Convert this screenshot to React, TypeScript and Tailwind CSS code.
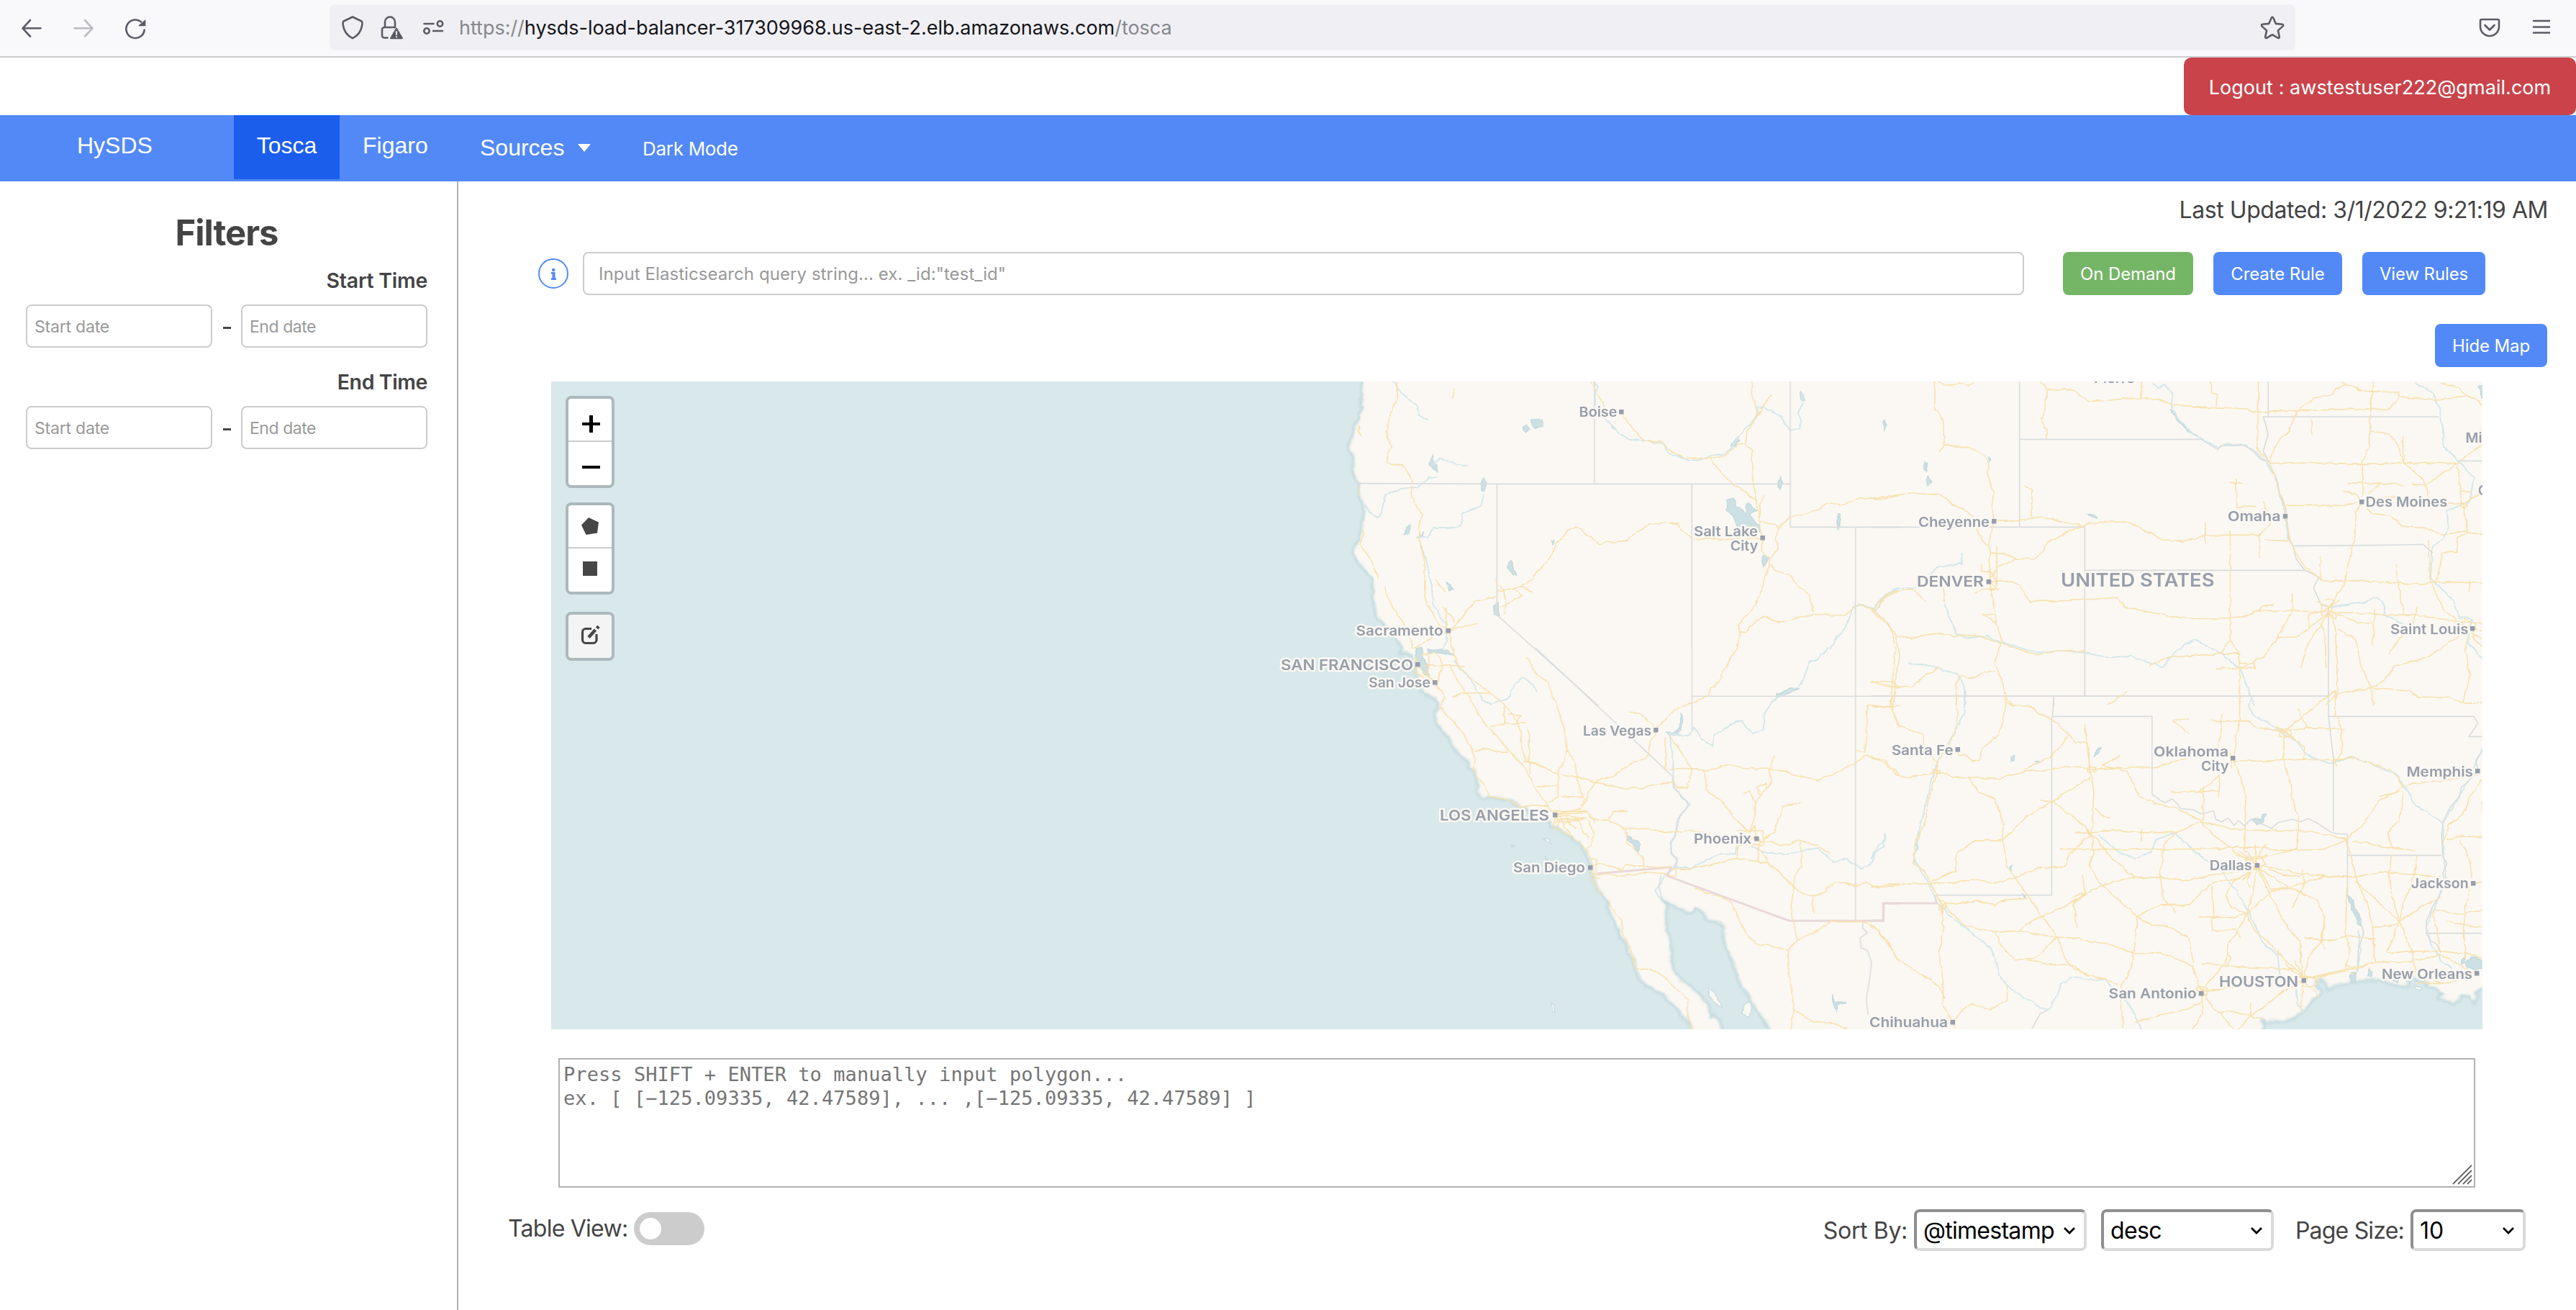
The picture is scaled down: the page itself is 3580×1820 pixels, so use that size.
import React from "react";

const Lines = ({ items, color, width, opacity = 1 }: { items: string[]; color: string; width: number; opacity?: number }) => (
  <g fill="none" stroke={color} strokeWidth={width} opacity={opacity} strokeLinejoin="round">
    {items.map((p, i) => (
      <polyline key={i} points={p} vectorEffect="non-scaling-stroke" />
    ))}
  </g>
);

const Shapes = ({ items, fill, stroke }: { items: string[]; fill: string; stroke?: string }) => (
  <g fill={fill} stroke={stroke ?? "none"} strokeWidth={1.5}>
    {items.map((p, i) => (
      <polygon key={i} points={p} vectorEffect="non-scaling-stroke" />
    ))}
  </g>
);

type Sheet = {
  transform: string;
  coast: { line: string; close: string }[];
  water: string[];
  islands: string[];
  borders: string[];
  frontier: string[];
  rivers: string[];
  roads: string[];
};

const northWest: Sheet = {
  transform: "translate(974 -10) scale(.57398 .33333)",
  coast: [
    {
      line: "268,20 266,70 262,130 268,138 258,170 260,188 252,200 246,240 240,270 233,300 238,325 246,345 243,400 250,435 260,455 258,490 266,530 272,570 268,610 264,650 260,690 248,720 245,740 250,775 265,800 278,825 290,850 294,890 291,930 296,960 300,1005 315,1035 330,1065 348,1100 358,1125 364,1142",
      close: "-1700,1142 -1700,20",
    },
  ],
  water: [
    "1150,525 1165,516 1173,530 1170,550 1188,565 1197,590 1195,545 1205,540 1222,570 1210,575 1205,590 1228,630 1232,655 1200,650 1175,635 1165,590 1148,570",
    "555,445 561,435 568,450 562,490 556,490",
    "620,785 628,780 633,800 638,838 630,830 618,805",
    "585,965 598,950 598,1003 586,1000",
    "430,370 438,340 440,365 449,380 447,405 440,400",
    "677,192 704,190 703,215 686,226 678,212",
    "655,222 663,212 671,228 663,240",
    "1276,440 1280,426 1284,450 1279,480 1275,465",
    "1160,298 1175,262 1181,275 1168,300",
    "1237,755 1250,760 1248,780 1238,805 1234,785",
    "1330,72 1334,80 1338,108 1332,112 1328,105",
    "1527,205 1531,192 1535,208 1531,230",
    "1418,585 1424,590 1423,630 1418,650",
    "398,1150 410,1145 412,1170 425,1215 428,1260 415,1245 405,1215 395,1180",
    "372,640 383,628 380,665 370,665",
    "470,865 480,880 488,897 480,905",
    "402,680 410,670 416,655 412,680",
    "725,695 731,690 727,712",
    "1270,1340 1290,1320 1305,1320 1285,1335",
  ],
  islands: [],
  borders: [
    "829,30 829,455",
    "260,455 593,457 1303,457",
    "593,458 593,1003 838,1380",
    "1065,458 1065,1142",
    "1303,30 1303,637 1568,637",
    "1461,638 1461,1142",
  ],
  frontier: [],
  rivers: [
    "828,30 838,50 830,90 828,160 855,185 885,240 910,272 960,278 995,290 1010,330 1060,360 1100,350 1120,335 1140,335 1160,310 1175,265 1225,170 1225,135 1245,140 1280,175 1303,235 1325,225 1330,200 1322,160 1335,110 1332,75",
    "342,30 360,75 400,130 405,175 428,190",
    "440,375 455,350 485,370 522,382",
    "450,430 430,430 400,470 345,485 325,500 315,560 305,597 285,580 272,540",
    "560,500 555,545 510,580 505,630 490,640 440,638 425,680 405,682",
    "407,710 420,770 435,880 438,960 468,1040 472,1110 460,1150 425,1155",
    "1568,890 1530,930 1510,985 1480,960 1455,970 1435,1060 1415,1100 1400,1142",
  ],
  roads: [
    "350,30 352,70 353,110 340,140 330,200 328,260 337,300 328,330 325,370 345,378 365,380 382,420 388,460 385,510 400,550 412,590 403,640 407,700 415,760 418,830 418,900 425,960 440,1010 455,1050 475,1068 485,1142",
    "475,1068 495,1045 515,1000 540,945 575,935 593,925",
    "590,855 595,880 610,900 650,885 668,870 690,825 715,780 728,745 735,705 750,685 765,650 785,635 810,665 842,708 860,695 880,703 910,690 935,650 965,625 995,618 1030,625 1045,655 1065,685 1140,688 1236,685",
    "593,905 610,903 615,960 612,1000",
    "650,885 678,905",
    "635,890 652,925 615,960 600,975",
    "262,650 272,665 262,710 275,740 290,780 298,820 305,850",
    "320,885 330,940 345,980 365,1030 380,1090 388,1142",
    "260,210 258,235 265,255",
    "490,60 485,105",
    "820,30 835,80 850,120 858,150",
    "895,165 915,210 950,278 990,280 1010,315 1045,348 1110,350 1145,340 1175,295 1193,287",
    "1210,30 1210,90 1222,150 1222,180 1198,240 1193,287 1200,305 1210,320 1215,480 1220,520 1228,600 1236,680 1236,740 1253,770 1253,800 1240,850 1235,900 1215,970 1180,1040 1180,1090 1175,1142",
    "1260,80 1245,110 1235,145 1222,175",
    "1110,350 1135,410 1165,460 1190,485 1222,530",
    "1240,507 1230,540 1228,610 1265,625 1275,640 1303,592 1350,580 1395,540 1435,540 1475,513 1520,523 1568,505",
    "1275,640 1270,690 1274,725 1255,765",
    "1255,795 1270,820 1300,835 1320,880 1350,920 1360,990",
    "1180,1075 1195,1075 1215,1035 1240,1008 1275,1035 1310,1020 1370,1000 1435,1005 1470,957 1500,980 1520,970 1530,935 1568,900",
    "1500,980 1530,1020 1545,1060 1555,1110 1558,1142",
    "470,970 470,1060",
    "458,970 485,1010 490,1035",
    "445,855 468,905",
    "262,470 258,500",
    "475,1068 520,1045 548,1040",
    "390,1142 410,1125 440,1095 475,1075",
  ],
};

const southWest: Sheet = {
  transform: "translate(974 370) scale(.57398 .34439)",
  coast: [
    {
      line: "364,0 358,25 372,18 383,30 392,60 396,90 400,115 404,145 412,175 428,195 442,205 450,225 452,245 442,262 444,300 460,335 475,360 486,395 495,420 512,445 525,462 524,485 535,495 544,520 546,560 545,585 558,607 580,604 610,612 630,620 645,638 665,650 672,668 695,676 715,690 722,705 722,722 738,724 755,745 775,768 795,795 806,820 814,850 820,885 825,930 835,965 848,1000 862,1025 862,1060 875,1095 888,1140 890,1165 905,1190 910,1230 925,1260 930,1305 940,1345 960,1370 990,1395 1010,1425 1030,1460 1045,1490 1060,1520 1066,1545",
      close: "-1700,1545 -1700,0",
    },
    {
      line: "1140,1545 1135,1510 1118,1480 1110,1490 1105,1440 1085,1400 1060,1365 1035,1335 1020,1300 1015,1240 1012,1170 1003,1140 1002,1090 1005,1050 1000,1030 990,1010 1012,1035 1030,1050 1060,1073 1070,1068 1072,1050 1095,1070 1100,1095 1125,1108 1143,1125 1142,1175 1150,1220 1162,1260 1170,1300 1178,1340 1190,1380 1205,1410 1212,1440 1225,1470 1240,1500 1252,1545",
      close: "",
    },
  ],
  water: [
    "908,758 918,765 942,795 935,822 928,815 920,785 908,772",
    "400,0 412,0 414,35 425,75 430,120 420,100 405,75 397,30",
    "425,8 470,10 490,30 460,20 430,22",
    "1003,340 1020,342 1035,325 1040,265 1044,280 1040,330 1025,350 1008,352",
    "1270,200 1268,185 1285,185 1300,165 1325,165 1310,175 1285,195",
    "1407,1400 1412,1430 1438,1433 1415,1440 1415,1470 1408,1440",
  ],
  islands: [
    "1105,1375 1120,1395 1135,1435 1137,1455 1120,1430 1105,1400",
    "1195,1430 1208,1430 1210,1465 1200,1492 1186,1475 1190,1450",
    "706,768 722,775 726,792 714,787",
    "627,798 637,803 630,806",
    "725,1432 731,1440 733,1470 727,1462",
    "708,840 716,858 710,856",
  ],
  borders: [
    "686,0 1018,518",
    "1018,518 1020,560 1040,600 1060,632 1035,680 1030,720 1024,760 1014,780 1015,830 1030,850 1026,885",
    "1065,0 1065,330",
    "1065,195 1568,195",
    "1461,0 1461,1101",
    "1480,1101 1478,1130 1490,1150 1472,1170 1475,1210 1490,1220 1500,1270 1495,1340 1487,1420 1492,1480",
    "990,920 985,960 992,1010",
  ],
  frontier: ["835,911 1015,885 1005,920 1300,1101 1528,1101 1528,1031 1568,1031"],
  rivers: [
    "490,50 500,80 530,130 560,215 580,228 620,205 640,140 655,120 680,150 692,178",
    "1395,0 1370,45 1350,60 1330,150 1270,200 1250,240 1240,270 1238,330 1215,345 1195,320 1188,295 1170,300 1120,350 1115,398 1090,370 1070,320 1055,355 1010,345 1020,450 1020,560 1058,632 1030,690 1026,760 1014,790 1015,830 1030,860 1020,885 1000,920 975,980 990,1010",
    "1210,800 1250,830 1300,832 1330,820 1370,810 1410,865 1440,850 1475,893 1500,865 1515,800 1535,775 1530,750",
    "1020,885 1060,888 1130,835 1170,830 1175,790",
  ],
  roads: [
    "480,70 490,110 510,160 540,240 560,300 600,370 630,430 660,480 680,550 695,590 712,630 733,670",
    "485,0 495,60 520,110 575,180 610,230 640,290 650,340 655,430 670,460 675,510",
    "665,35 685,100 715,140 735,220 755,320 763,410 750,470 740,510 742,600 715,625",
    "763,410 785,480 790,540 803,610 797,640",
    "445,145 468,200 455,240 480,290 510,340 530,400 540,460 535,495 560,550 575,600 610,610 650,640 685,635 720,640",
    "670,460 700,475 740,510 790,525 828,540 870,520 915,470 955,445 965,380 978,340",
    "540,415 575,405 590,420 620,422",
    "485,200 505,182 575,182",
    "733,672 797,650 828,540 895,567 945,565 970,553 1018,540 1030,565 1055,565 1063,490",
    "1003,493 1065,487 1100,495 1155,470 1190,487 1250,485 1300,505 1370,535 1420,500 1460,465 1485,435 1530,455 1568,510",
    "978,331 1000,285 1035,240 1065,225 1105,190 1110,165 1135,130 1145,80 1175,0",
    "910,262 940,265 975,320",
    "1000,360 1000,430 1003,493",
    "1010,355 1035,410 1065,490",
    "733,672 810,665 835,695 865,695 900,730 960,730 1000,745 1060,738 1110,748",
    "1172,738 1238,738 1238,795 1175,795 1175,850",
    "1205,740 1218,680 1218,625 1245,570 1258,540 1253,490 1265,433",
    "1188,585 1205,580 1218,625",
    "1230,590 1222,560 1245,545 1245,570",
    "1095,495 1100,570 1140,625 1170,690 1205,745",
    "1240,768 1265,745 1275,690 1285,640 1310,630 1330,625",
    "1225,780 1255,780 1280,798 1300,795 1325,775 1370,800 1400,830",
    "1328,780 1330,880 1312,920 1310,967",
    "1230,770 1228,800 1250,865 1290,930 1312,967 1345,1000 1375,1000 1410,943 1465,960 1485,945 1515,968 1568,955",
    "1228,795 1225,860",
    "1252,867 1170,850 1110,875 1050,893 1015,890 960,880 905,880 895,895 850,870 822,880",
    "825,910 900,920 955,905 990,910 1010,920 1025,918 1025,890",
    "1312,967 1305,1040 1312,1110 1320,1180 1298,1220 1300,1320 1308,1400 1312,1440 1305,1540",
    "1298,1220 1250,1200 1220,1197 1195,1150 1175,1080 1158,1020 1070,970",
    "1320,1180 1360,1150 1400,1105 1485,1105 1520,1150 1550,1220 1568,1270",
    "1312,1460 1360,1510 1400,1510 1440,1538",
    "733,672 730,722 775,765 805,805 822,850 822,930 850,1005",
    "862,1020 870,1050 895,1100 897,1150 915,1210 930,1295 965,1297 1000,1330 1030,1380 1055,1420 1055,1490 1066,1540",
    "815,695 828,760 820,800 808,810",
    "905,735 910,790 945,845 948,900",
    "1568,235 1545,240 1490,230 1485,400 1483,418 1463,418",
    "1558,0 1555,60 1545,240 1560,290 1568,320",
    "1497,138 1550,140 1568,155",
    "730,660 800,660 815,660",
    "733,680 770,680 808,690 750,705 730,700",
    "745,672 755,720 772,750",
    "735,695 790,690 800,740 815,765",
    "760,670 765,700 785,730",
    "733,672 745,700 738,722",
    "750,600 800,600",
    "690,557 738,557",
    "865,690 875,660 908,660",
    "830,708 828,690 815,680",
    "398,40 405,80 435,125 445,150",
    "410,30 440,20 455,40 462,75 445,150",
    "415,72 515,72",
    "430,30 425,110 445,145",
    "398,30 396,100 425,130",
    "610,220 610,310 575,318",
    "610,305 665,305",
    "620,270 650,270 640,305",
    "1357,1003 1360,1072",
    "820,850 835,850 830,930 845,930",
    "1205,740 1218,718 1218,760 1200,790",
    "665,325 672,350 670,460",
    "658,455 684,462",
  ],
};

const northEast: Sheet = {
  transform: "translate(1834 -10) scale(.57398 .33333)",
  coast: [],
  water: [
    "30,205 33,192 37,210 33,230",
    "131,365 137,370 134,405 130,395",
    "133,440 140,425 148,450 138,465",
    "525,582 540,585 551,598 535,595",
    "723,140 735,160 740,180 775,240 793,255 770,240 740,190",
    "285,345 291,355 287,362",
    "1472,50 1480,45 1480,100",
    "213,785 220,782 221,792",
  ],
  islands: [],
  borders: [
    "360,30 360,637",
    "360,271 800,271 840,313 850,297 905,297 925,320 945,355 965,365",
    "0,637 518,637 518,1341",
    "518,817 1050,817",
    "962,30 962,177",
    "1376,177 950,177 957,215 962,250 950,320 965,370 985,450 990,510 1005,560 1012,690 1022,715 1210,713 1338,709 1360,745",
    "1022,715 1030,770 1050,815 1085,845 1072,890 1090,960 1108,970 1108,1341",
    "0,1341 1108,1341",
    "443,1341 443,1380",
    "1422,361 1480,361",
  ],
  frontier: [],
  rivers: [
    "685,35 695,58 710,45 730,80 728,130 740,180 775,240 800,270 840,305 860,293 910,295 940,335 955,365 980,430 995,520 1003,600 1012,690",
    "1320,30 1360,80 1376,140 1385,230 1385,300 1422,360 1460,430 1450,530 1395,570 1398,640 1385,690 1360,720 1355,850 1410,940 1425,1010 1455,1020 1445,1120 1480,1185",
    "178,960 200,1050 205,1080 230,1100 280,1090 320,1120 345,1130 400,1160 460,1150 530,1165 580,1183 630,1175 705,1220 740,1150 785,1108 850,1165 895,1230 915,1320 930,1380",
    "90,1207 130,1210 160,1225 210,1250 225,1300 230,1380",
    "0,980 25,935 60,893 115,888",
    "1110,970 1150,960 1200,950 1220,930 1240,950 1245,1000 1290,1045",
    "218,745 220,785 165,805 140,835",
  ],
  roads: [
    "155,30 155,145 175,190 178,295 240,305 275,340 285,370 285,440 298,490 293,540 298,610",
    "165,320 178,295",
    "160,35 190,45 215,40 235,45 250,33",
    "0,520 95,495 165,503 200,540 235,575 250,595",
    "298,610 360,608 400,597 440,600 460,615 515,630 550,617 620,615 660,645 705,690 755,697 810,670 940,670 970,620",
    "515,630 460,670 430,700 415,740 398,768 350,770 310,800 288,850",
    "298,610 288,680 288,860 295,940 303,1030 317,1110 300,1200 320,1290 328,1350 345,1380",
    "255,630 268,690 285,715",
    "288,745 320,748 355,770",
    "390,595 390,480 373,463",
    "410,30 428,65 480,62 530,112 580,108 620,100 690,102 735,128 830,140 910,147 925,158 1080,150 1165,145 1255,145 1280,95",
    "428,65 418,165 412,190 425,230 425,268",
    "822,30 825,75 837,80 837,140",
    "655,30 655,98",
    "938,30 938,160 935,310 965,370",
    "965,370 1070,370 1200,373 1290,370 1420,370",
    "965,370 985,280 1010,240 1030,160 1070,100 1120,85 1125,60 1155,45 1190,70 1275,75 1280,95 1370,105 1440,90",
    "1135,30 1155,45",
    "1380,35 1420,55 1445,90 1470,110 1480,130",
    "1216,30 1210,150 1208,300 1190,360 1190,510",
    "965,370 985,470 1000,530 1005,590 1015,690 1040,780 1090,860",
    "1005,547 1140,547 1188,530 1240,515 1310,515 1400,540 1435,540 1480,490",
    "1145,487 1175,500 1190,540 1175,570 1172,680 1155,800 1145,880 1110,970",
    "286,860 340,865 360,880 385,947 480,943 575,933 600,933 615,970 670,990 760,1017 840,1020 900,1010 940,985 1020,985 1090,990 1110,970",
    "1110,970 1110,990 1250,1002 1310,1003 1380,1020 1440,1035 1480,1040",
    "1090,862 1180,860 1330,875 1365,865 1480,870",
    "870,655 870,1110 890,1160 893,1220 893,1380",
    "848,1165 893,1163",
    "870,1110 845,1165 760,1175 720,1180 675,1215",
    "835,1225 930,1225 930,1205 893,1205",
    "1110,990 1060,1060 1030,1095 985,1097 950,1180 893,1225",
    "985,1097 1020,990",
    "1110,990 1125,1060 1130,1320 1125,1380",
    "1090,1040 1100,1100 1102,1225",
    "1110,990 1060,1120 1048,1180 1040,1230",
    "1130,1060 1175,1105 1185,1200 1210,1305",
    "1455,1060 1400,1120 1350,1180 1270,1215 1245,1270 1210,1310 1130,1330 1100,1380",
    "1210,1310 1305,1320 1325,1345 1400,1345 1430,1370 1480,1372",
    "1210,1310 1218,1380",
    "1445,1070 1440,1150 1450,1260 1435,1370",
    "1455,1090 1480,1130",
    "1290,370 1340,440 1345,470",
    "1155,452 1275,457 1290,463",
    "1235,455 1205,500",
    "1310,460 1345,460",
    "1420,370 1375,425 1345,460 1350,510",
    "1480,290 1420,370 1425,440 1430,540",
    "1430,490 1455,490",
    "1435,540 1447,660 1480,668",
    "1447,660 1420,680 1420,740 1385,745 1370,860",
    "1210,240 1255,250 1275,290 1290,370",
    "1290,255 1290,365",
    "1350,690 1355,860 1385,980 1440,1050",
    "1195,550 1215,580 1260,590 1285,635 1340,640 1385,670 1447,650",
    "0,985 25,940 45,910 100,895 135,945",
    "0,985 40,1040 60,1090 70,1170 60,1280 55,1380",
    "60,1090 100,1100 150,1080 200,1090 260,1090 317,1120 400,1170 450,1150 520,1157",
    "205,1380 205,1300 215,1260 250,1265 270,1245 300,1235",
    "0,1285 50,1300 100,1305 125,1260 165,1225",
    "620,1322 575,1380",
    "885,435 885,555 935,550",
    "870,452 900,452",
    "940,660 940,765",
    "810,620 810,710",
    "955,690 1010,695",
    "1068,190 1068,248",
    "1088,760 1090,860",
    "1270,790 1280,900 1290,1000",
    "1220,980 1215,1130",
    "1255,1165 1275,1110 1310,1050 1325,965",
    "1020,915 1022,985",
    "1450,860 1450,905",
    "950,530 960,570 975,600",
    "1060,1060 1060,1000 1110,985 1180,1035 1215,1035",
    "1080,945 1110,970 1135,940",
    "1100,940 1118,940 1118,1005 1090,1005 1090,960",
    "1125,990 1125,1020 1100,1010",
    "265,820 290,825 305,860 305,895 270,895 250,915",
    "268,790 265,820",
    "305,715 305,860",
    "285,860 310,900",
    "175,880 180,950",
    "295,1000 270,1000 305,1035",
    "1435,1020 1465,1040 1455,1080 1480,1100",
    "1425,1040 1480,1070",
    "940,985 950,965 975,960",
    "1425,530 1445,545 1435,560 1425,545",
  ],
};

const southEast: Sheet = {
  transform: "translate(1834 430) scale(.57398 .33333)",
  coast: [
    {
      line: "945,1415 955,1400 946,1370 960,1382 975,1376 1000,1380 1030,1360 1055,1325 1068,1290 1085,1270 1090,1250 1080,1235 1078,1212 1092,1200 1100,1215 1105,1245 1125,1230 1160,1215 1200,1207 1230,1205 1260,1220 1290,1235 1305,1232 1298,1212 1310,1195 1330,1205 1350,1215 1345,1230 1370,1240 1375,1260 1385,1265 1370,1280 1395,1290 1410,1305 1425,1290 1430,1270 1450,1272 1462,1308 1470,1275 1462,1255 1485,1240",
      close: "1485,1415",
    },
  ],
  water: [
    "1440,1130 1455,1108 1475,1115 1485,1130 1485,1155 1460,1160 1445,1150",
    "1430,1120 1438,1115 1436,1135 1430,1138",
    "1165,1170 1175,1175 1173,1205 1165,1215 1160,1195",
    "1208,1158 1214,1170 1212,1190 1203,1190",
    "1265,1205 1280,1200 1275,1215",
    "540,275 550,240 558,237 548,265",
    "340,275 348,268 346,293 340,295",
    "398,295 407,290 407,298",
    "922,535 935,530 945,540 948,515 955,512 952,550 935,555",
    "1155,852 1168,870 1172,910 1185,935 1190,980 1180,975 1170,925 1158,880",
    "337,735 342,730 340,750",
    "365,845 373,855 371,862",
    "108,640 113,630 112,660",
  ],
  islands: ["1315,1228 1328,1230 1335,1240 1326,1248"],
  borders: [
    "0,21 1108,21",
    "518,0 518,21",
    "1108,0 1108,106 1460,106 1470,135 1448,190 1480,190",
    "1108,106 1120,280 1120,585",
    "443,21 440,106 681,106 681,430 700,455 712,465 730,450 742,470 750,490 780,495 800,512 830,500 835,535 850,545 865,530 880,560 890,540 905,562 920,535 970,572 985,550 1020,535 1040,545 1060,532 1085,555 1115,590 1140,597 1154,597 1154,852",
    "1154,685 1382,685",
    "438,106 438,851 157,851 157,880",
    "1190,980 1193,1010 1180,1080 1178,1170",
    "1345,1010 1480,1010",
    "430,1328 410,1345 400,1375 390,1410",
    "1480,250 1465,290 1470,330 1445,380 1430,400 1425,440 1405,480 1395,510 1385,550 1382,600 1385,690 1395,720 1385,760 1390,800 1375,860 1360,900 1345,960 1345,1010 1355,1040 1370,1055 1380,1090",
  ],
  frontier: ["0,957 31,957 31,885 162,885"],
  rivers: [
    "230,0 225,100 190,210 160,300 140,420 115,600 105,700 145,820 160,880 172,900 190,935 225,980 260,1030 290,1070 305,1130 310,1180 330,1230 360,1270 385,1290 410,1320 430,1328 445,1290 460,1220 480,1200 500,1190 530,1205 565,1203 580,1230 600,1260 620,1295 640,1350 655,1410",
    "915,0 920,30 915,60 925,100 960,130 1000,180 1030,210 1060,270 1110,305 1160,275 1200,295 1230,320 1270,345 1300,420 1320,480 1350,510 1385,545",
    "550,600 600,670 640,700 680,670 690,620 735,592 780,660 800,690 850,750 870,800 885,830 920,940 950,1050 985,1100 990,1180 1030,1240 1035,1310 1048,1340",
    "0,700 10,670 30,650 35,600",
    "1480,240 1465,300 1445,380 1410,480 1385,550 1388,700 1392,780 1370,880 1345,980 1355,1050 1385,1130 1410,1160",
    "1180,1000 1185,1080 1178,1170",
  ],
  roads: [
    "50,0 50,70 65,140 125,180 130,240 160,300 158,335",
    "0,63 45,70",
    "160,335 140,450 130,560 105,640 105,720 130,750 145,800 165,870 172,890",
    "0,270 40,310 60,345 90,360 135,350 160,335 200,357 310,367 340,350 380,335 430,330 470,315 540,325 620,320 690,320 740,290 790,270",
    "878,290 960,292 1050,285 1120,290 1160,275 1260,330 1290,400 1310,385 1370,378 1470,350",
    "205,0 210,120 200,180 195,210 160,300",
    "210,244 215,270 230,265 245,293 262,290 270,240 310,180 325,80 325,0",
    "325,45 345,60 380,60 405,90 440,120 480,180 495,213 525,213 530,325",
    "518,140 530,325 540,420 535,595",
    "480,180 440,270 370,330",
    "605,270 560,310 620,335 640,400 650,440 700,475 740,490 800,540",
    "530,360 440,460 380,520 320,620 250,625 205,680 205,750 150,790",
    "235,355 260,420 300,450 320,550 320,620 330,730 350,780 390,880 450,1020",
    "410,458 440,460 495,530 535,595",
    "545,485 560,520 580,530",
    "495,592 600,580 650,590 740,590 800,545",
    "535,595 540,680 528,730 560,810",
    "535,595 480,680 470,733 405,738 345,780 300,800 250,783 205,800 145,800",
    "800,545 830,600 890,680 935,725",
    "800,545 870,575 910,580 1035,582 1080,590 1150,615",
    "535,595 580,690 635,775 700,778 770,790 830,765 900,750 935,725",
    "893,0 893,120 885,180 878,290 890,340 908,440 905,660 935,725",
    "820,125 915,125 930,150 1000,170",
    "850,97 848,170 840,230",
    "730,120 770,120",
    "732,125 770,180",
    "725,420 840,418",
    "790,420 810,400 845,350",
    "845,345 840,445",
    "805,400 805,540",
    "1000,170 1000,300 1015,380 1020,450 1035,520 1035,580 1030,660 940,700",
    "1000,170 1050,100 1090,40 1125,0",
    "1000,170 1050,155 1150,160",
    "1000,170 1050,230 1050,285",
    "1125,0 1125,100 1140,160 1140,260 1120,310",
    "1060,160 1040,110 1035,70",
    "457,658 620,660 830,658 890,650 960,655 1000,665 1100,660 1150,620",
    "1290,400 1230,460 1190,560 1150,620 1165,700 1173,780",
    "1230,440 1280,420",
    "1290,420 1280,540 1250,590 1265,655 1320,665",
    "1165,630 1200,630 1220,645 1280,655",
    "935,725 1040,760 1100,772 1173,775 1230,755 1310,765 1380,775",
    "1459,802 1480,800",
    "1173,775 1200,880 1215,985 1220,1130 1150,1160 1048,1200",
    "1260,685 1255,780 1265,870 1280,960",
    "1325,685 1310,800 1290,880 1280,960",
    "1173,790 1240,900 1280,960 1310,1090 1320,1180 1380,1215",
    "1380,860 1330,900 1280,960 1255,980 1215,985",
    "1450,815 1440,900 1435,990 1440,1120",
    "1360,910 1420,930 1480,915",
    "1395,960 1440,975 1480,985",
    "1395,620 1430,605 1480,608",
    "1425,620 1450,700 1455,780",
    "1478,370 1450,440 1440,500 1400,560 1385,640",
    "1480,460 1480,510",
    "1250,1095 1300,1085 1380,1085 1440,1095 1480,1110",
    "1250,1090 1280,960",
    "1220,1130 1310,1128 1380,1100 1440,1155 1467,1177",
    "1380,1090 1375,1040 1360,920",
    "935,735 925,840 910,930 890,1000 865,1050 860,1130 800,1250",
    "935,735 880,790 860,850 870,900 910,930",
    "910,930 930,1000 960,1040 1000,1120 1030,1160 1048,1200",
    "935,735 970,860 1000,960 1040,1050 1045,1200",
    "935,735 1010,815 1080,870 1100,950 1090,1020 1100,1080",
    "1045,745 1050,800 1020,905",
    "1173,775 1100,772 1050,800 1010,820 965,840 940,880 910,930",
    "800,1250 860,1240 950,1200 1048,1195 1080,1195 1150,1165 1170,1180",
    "800,1250 780,1150 760,1130 700,1090 650,1095 560,1050 530,1045 500,1030 450,1027 360,1000 300,1003 230,980 172,890",
    "360,997 400,950 450,915 495,870 560,810 640,775",
    "510,770 520,840 490,880 500,985",
    "560,810 600,870 645,940 680,975 720,980 770,1030 780,1130",
    "645,940 640,1050 630,1160 605,1230 610,1410",
    "645,940 700,890 770,895 800,840 830,795 900,780",
    "700,778 710,870 740,920",
    "535,690 530,740",
    "655,575 655,625",
    "740,590 710,640 700,778",
    "825,815 830,900 825,1000 885,995 895,1030",
    "795,940 870,945 910,930",
    "800,1250 805,1340 780,1410",
    "800,1250 830,1320 850,1350 880,1410",
    "800,1300 760,1330 700,1350 640,1380",
    "172,890 175,1000 165,1100 175,1210 175,1310 198,1380 205,1410",
    "172,890 260,875 300,890 330,870 380,865",
    "0,970 40,1040 60,1110 120,1180 165,1230 180,1280",
    "195,1380 240,1305 290,1325 330,1290 330,1230",
    "0,818 50,805 145,803",
    "450,1027 400,1110 350,1125 320,1070 300,1010",
    "450,1027 470,1110 490,1160 560,1200 600,1220",
    "380,1120 430,1140 480,1140 530,1190",
    "1048,1206 1000,1250 950,1320 918,1355 890,1410",
    "918,1355 860,1330 840,1345",
    "918,1355 950,1370",
    "920,1295 918,1355",
    "1048,1206 1040,1340",
    "1048,1206 1075,1250 1085,1280",
    "1320,1215 1400,1218 1440,1190",
    "985,1080 1010,1150 1048,1200 1110,1180",
    "1025,1120 1040,1170 1048,1206",
    "1100,950 1090,1050 1060,1110 1048,1200",
    "1154,800 1150,900 1148,1000 1160,1080 1148,1160",
    "1048,1230 1075,1230 1085,1205 1060,1190 1030,1190 1035,1225",
    "1050,1030 1120,1040 1160,1020 1220,1035",
    "1148,1140 1170,1160 1220,1130",
    "920,690 945,690 955,720 940,745 915,740 905,715 915,690",
    "890,665 925,710",
    "955,640 930,710",
    "930,640 935,725 900,790",
    "885,685 920,700 960,685",
    "960,740 1000,770 1040,770",
    "940,740 970,830 1010,818",
    "925,740 910,790 920,820",
    "990,160 1018,160 1018,190 990,190 990,160",
    "980,150 1025,195",
    "525,315 545,315 545,335 525,335 525,315",
    "150,328 166,328 166,345 150,345 150,328",
    "525,585 540,605",
    "160,865 178,880 182,905 168,910 165,885",
    "790,1235 815,1240 812,1265 792,1268 790,1235",
    "860,1095 872,1110 862,1150 855,1130",
    "640,935 652,945",
    "485,865 510,840 522,850 490,885",
    "870,255 875,320",
    "1120,280 1130,310",
    "700,770 706,785",
    "800,1135 895,1150 960,1155 1030,1160",
  ],
};

const sheets = [northWest, southWest, northEast, southEast];

const labels: [string, number, number, number, number][] = [
  ["Boise", 1428.6, 49, 52.8, 18.5],
  ["Salt Lake", 1588, 215, 89, 18.5],
  ["City", 1638.7, 235, 38.5, 18.5],
  ["Sacramento", 1118.6, 353, 121, 18.5],
  ["SAN FRANCISCO", 1014, 401, 184, 20.5],
  ["San Jose", 1136, 425, 86, 18.5],
  ["Las Vegas", 1434, 491.5, 95, 18.5],
  ["LOS ANGELES", 1235, 610, 152, 20.5],
  ["San Diego", 1337, 682, 100, 18.5],
  ["Phoenix", 1588, 642, 80, 18.5],
  ["Chihuahua", 1832, 897, 109, 18.5],
  ["Cheyenne", 1900, 202, 99, 18.5],
  ["DENVER", 1898, 285, 93, 20.5],
  ["UNITED STATES", 2098, 285, 213.5, 25],
  ["Omaha", 2330, 194, 73.5, 18.5],
  ["Des Moines", 2521.6, 174, 113.6, 18.5],
  ["Saint Louis", 2556, 351, 108.5, 18.5],
  ["Mi", 2660.5, 85, 23, 18.5],
  ["C", 2678, 158, 13, 18.5],
  ["Pierre", 2144, 1.5, 57, 18.5],
  ["Santa Fe", 1862.7, 518.7, 86, 18.5],
  ["Oklahoma", 2227, 520.7, 104, 18.5],
  ["City", 2293, 541, 38.5, 18.5],
  ["Memphis", 2578.5, 548.7, 92.5, 18.5],
  ["Dallas", 2304.7, 678.7, 59, 18.5],
  ["Jackson", 2584.8, 704.3, 80, 18.5],
  ["HOUSTON", 2318, 840.7, 110, 20.5],
  ["New Orleans", 2544, 830, 126, 18.5],
  ["San Antonio", 2164.6, 857, 122, 18.5],
];

const dots: [number, number][] = [
  [1487, 42], [1683.4, 217], [1246.6, 346], [1204, 393], [1228, 418], [1535, 484], [1395, 602],
  [1444, 675], [1675, 635], [1947.6, 890], [2005, 194], [1997.6, 278], [2409.7, 187], [2516, 167],
  [2670, 343], [1954.5, 511], [2337, 523], [2677, 541], [2370.7, 672], [2671, 697], [2435.5, 832],
  [2676, 822], [2293, 850],
];

const MapCanvas = () => (
  <svg viewBox="0 0 2684 900" className="block h-full w-full">
    <defs>
      <filter id="rough" x="0" y="0" width="2684" height="900" filterUnits="userSpaceOnUse">
        <feTurbulence type="fractalNoise" baseFrequency="0.09" numOctaves="2" seed="4" result="n" />
        <feDisplacementMap in="SourceGraphic" in2="n" scale="5" xChannelSelector="R" yChannelSelector="G" />
      </filter>
      <filter id="soft" x="0" y="0" width="2684" height="900" filterUnits="userSpaceOnUse">
        <feGaussianBlur stdDeviation="1.6" />
      </filter>
    </defs>
    <rect width="2684" height="900" fill="#fbf8f3" />
    <g filter="url(#rough)">
      {sheets.map((s, i) => (
        <g key={i} transform={s.transform}>
          <Shapes items={s.coast.map((c) => `${c.line} ${c.close}`)} fill="#d8e8eb" />
        </g>
      ))}
      <g filter="url(#soft)">
        {sheets.map((s, i) => (
          <g key={i} transform={s.transform}>
            <Lines items={s.coast.map((c) => c.line)} color="#bdd6db" width={3.5} opacity={0.8} />
          </g>
        ))}
      </g>
      {sheets.map((s, i) => (
        <g key={i} transform={s.transform}>
          <Shapes items={s.water} fill="#cde1e5" stroke="#c4dade" />
          <Shapes items={s.islands} fill="#fbf8f3" stroke="#c9dde1" />
          <Lines items={s.rivers} color="#d5e8ea" width={2} />
        </g>
      ))}
    </g>
    {sheets.map((s, i) => (
      <g key={i} transform={s.transform}>
        <Lines items={s.borders} color="#d9dcdd" width={1.6} />
        <Lines items={s.frontier} color="#ead8da" width={3} />
      </g>
    ))}
    <g filter="url(#rough)">
      {sheets.map((s, i) => (
        <g key={i} transform={s.transform}>
          <Lines items={s.roads} color="#f8e1ae" width={1.6} />
        </g>
      ))}
    </g>
    <g fill="#979eab">
      {dots.map(([x, y], i) => (
        <rect key={i} x={x - 3} y={y - 3} width="6.5" height="6.5" />
      ))}
    </g>
    <g
      fill="#979eab"
      stroke="#fbf8f3"
      strokeWidth="5"
      strokeLinejoin="round"
      paintOrder="stroke"
      fontFamily="Inter, sans-serif"
      fontWeight="600"
    >
      {labels.map(([t, x, y, w, s], i) => (
        <text key={i} x={x} y={y} fontSize={s} textLength={w} lengthAdjust="spacingAndGlyphs">
          {t}
        </text>
      ))}
    </g>
  </svg>
);

const BrowserBar = () => (
  <div className="flex h-20 items-start border-b-2 border-[#cccccf] bg-[#f9f9fb] text-[#5b5b66]">
    <div className="flex h-[76px] w-[458px] items-center pl-[28px]">
      <svg className="h-8 w-8" viewBox="0 0 32 32" fill="none" stroke="currentColor" strokeWidth="2.6" strokeLinecap="round" strokeLinejoin="round">
        <path d="M14 6 3.500 17.300 14 28.500M3.500 17.300H28.500" />
      </svg>
      <svg className="ml-10 h-8 w-8 text-[#bcbcc0]" viewBox="0 0 32 32" fill="none" stroke="currentColor" strokeWidth="2.6" strokeLinecap="round" strokeLinejoin="round">
        <path d="M18 6 28.500 17.300 18 28.500M28.500 17.300H3.500" />
      </svg>
      <svg className="ml-10 h-9 w-8" viewBox="0 0 32 36" fill="none" stroke="currentColor" strokeWidth="2.6" strokeLinecap="round">
        <path d="M28.700 21.500A12.700 12.700 0 1 1 24 10.300" />
        <path d="M30.300 7v9.300h-8.800c-.8 0-1.200-.8-.6-1.400z" fill="currentColor" stroke="none" />
      </svg>
    </div>
    <div className="mt-1.5 flex h-16 w-[2732px] items-center rounded-lg bg-[#f0f0f4] pl-[15px] pr-[14px]">
      <svg className="h-9 w-9" viewBox="0 0 36 36" fill="none" stroke="currentColor" strokeWidth="2.6" strokeLinejoin="round">
        <path d="M17 3.500 29.500 9.500c1.300 1 1.200 2 .8 5C29.200 22.500 24.500 29.500 17 33.200 9.500 29.500 4.800 22.500 3.700 14.500c-.4-3-.5-4 .8-5z" />
      </svg>
      <svg className="ml-[18px] h-9 w-9" viewBox="0 0 36 36" fill="none" stroke="currentColor" strokeWidth="2.6" strokeLinejoin="round" strokeLinecap="round">
        <path d="M8 18v-7.500a7 7 0 0 1 14 0V18M11.500 32.500H7A3 3 0 0 1 4 29.500V21a3 3 0 0 1 3-3h15" />
        <path d="M24 19.500 32 33.200H16z" fill="currentColor" stroke="currentColor" strokeWidth="2" />
        <path d="M24 24v4M24 31v.5" stroke="#f0f0f4" strokeWidth="2" />
      </svg>
      <svg className="ml-[24px] h-8 w-8" viewBox="0 0 32 32" fill="none" stroke="currentColor" strokeWidth="2.6" strokeLinecap="round">
        <path d="M2.500 11h13M15 21h13" />
        <circle cx="24.500" cy="11" r="3.700" />
        <circle cx="6" cy="21" r="3.700" />
      </svg>
      <span className="ml-[19px] whitespace-nowrap pt-0.5 font-[Inter,sans-serif] text-[27px] leading-8 tracking-[-0.02px] text-[#87878d]">
        https://<span className="text-[#15141a]">hysds-load-balancer-317309968.us-east-2.elb.amazonaws.com</span>/tosca
      </span>
      <svg className="ml-auto h-9 w-9" viewBox="0 0 36 36" fill="none" stroke="currentColor" strokeWidth="2.6" strokeLinejoin="round">
        <path d="M16.700 4.700c.5-1.200 2.100-1.200 2.600 0l3.500 8.200 9 .9c1.300.2 1.800 1.700.8 2.600l-6.700 6 1.900 8.700c.3 1.300-1.100 2.200-2.200 1.600L18 28.200l-7.600 4.500c-1.100.6-2.500-.3-2.200-1.600l1.900-8.700-6.700-6c-1-.9-.5-2.400.8-2.600l9-.9z" />
      </svg>
    </div>
    <div className="flex h-[76px] flex-1 items-center justify-end pr-[34px]">
      <svg className="h-8 w-8" viewBox="0 0 32 32" fill="none" stroke="currentColor" strokeWidth="2.600" strokeLinecap="round" strokeLinejoin="round">
        <path d="M5 5h22a2 2 0 0 1 2 2v8a13 13 0 0 1-26 0V7a2 2 0 0 1 2-2zM9.500 13l6.500 6.500 6.500-6.500" />
      </svg>
      <svg className="ml-[42px] h-8 w-7" viewBox="0 0 28 32" fill="none" stroke="currentColor" strokeWidth="2.600" strokeLinecap="round">
        <path d="M3 7h22M3 15.500h22M3 23.500h22" />
      </svg>
    </div>
  </div>
);

const DateRange = ({ label, tracking }: { label: string; tracking: string }) => (
  <div className="mb-[38px]">
    <div className={`${tracking} h-[43px] text-right text-[28.500px] font-semibold leading-5 text-[#444]`}>{label}</div>
    <div className="flex h-[60px] items-center text-[23px] text-[#999]">
      <div className="flex h-full w-[259px] items-center rounded-lg border-2 border-[#ccc] pl-2.5 pt-0.5 tracking-[-0.2px]">Start date</div>
      <div className="mx-auto mt-1 h-[3px] w-[11px] bg-[#444]" />
      <div className="flex h-full w-[259px] items-center rounded-lg border-2 border-[#ccc] pl-2.5 pt-0.5 tracking-[-0.45px]">End date</div>
    </div>
  </div>
);

const Sidebar = () => (
  <aside className="h-[1568px] w-[637px] border-r-2 border-[#b0b0b0] pl-9 pr-[41px] pt-[48px]">
    <h1 className="mb-[32px] text-center text-[49px] font-bold leading-[48px] tracking-[-1px] text-[#444]">Filters</h1>
    <DateRange label="Start Time" tracking="tracking-[-0.25px]" />
    <DateRange label="End Time" tracking="tracking-[-0.4px]" />
  </aside>
);

const Chevron = () => (
  <svg className="h-4 w-5" viewBox="0 0 20 16" fill="none" stroke="#000" strokeWidth="2.800">
    <path d="M3 4l7 7 7-7" />
  </svg>
);

const Select = ({ value, box }: { value: string; box: string }) => (
  <div className={`${box} flex h-[58px] items-center justify-between rounded-lg border-4 border-b-[#dadada] border-l-[#8f8f8f] border-r-[#dadada] border-t-[#8f8f8f] pl-[9px] pr-2.5 pt-0.5 text-black`}>
    <span>{value}</span>
    <Chevron />
  </div>
);

const Button = ({ text, box }: { text: string; box: string }) => (
  <button className={`${box} flex h-[60px] shrink-0 items-center justify-center rounded-lg pt-0.5 text-[24px] tracking-[-0.12px] text-white`}>{text}</button>
);

const controlBox = "w-[68px] overflow-hidden rounded-lg border-4 border-black/20 bg-white bg-clip-padding";

const MapControls = () => (
  <div className="absolute left-5 top-5 flex flex-col">
    <div className={controlBox}>
      <div className="flex h-[60px] items-center justify-center border-b-2 border-[#ccc]">
        <svg className="mt-3 h-7 w-7" viewBox="0 0 28 28" stroke="#000" strokeWidth="4"><path d="M3 14h25" /><path d="M15.500 2v24" strokeWidth="5" /></svg>
      </div>
      <div className="flex h-[60px] items-center justify-center">
        <svg className="mt-2.5 h-7 w-7" viewBox="0 0 28 28" stroke="#000" strokeWidth="4"><path d="M3 14h25" /></svg>
      </div>
    </div>
    <div className={`${controlBox} mt-5`}>
      <div className="flex h-[60px] items-center justify-center border-b-2 border-[#ccc]">
        <svg className="h-7 w-7" viewBox="0 0 28 28" fill="#464646"><path d="M12 2 26 8.500 24 23.500 8.500 26 2 12.500z" /></svg>
      </div>
      <div className="flex h-[60px] items-center justify-center pb-1"><div className="h-5 w-5 bg-[#464646]" /></div>
    </div>
    <div className="mt-6 flex h-[68px] w-[68px] items-center justify-center overflow-hidden rounded-lg border-4 border-black/20 bg-[#f4f4f4] bg-clip-padding">
      <svg className="-mt-1 h-7 w-7" viewBox="0 0 28 28" fill="none" stroke="#464646" strokeWidth="3.200">
        <path d="M16 5.500H8A4.500 4.500 0 0 0 3.500 10v11A4.500 4.500 0 0 0 8 25.500h10.500A4.500 4.500 0 0 0 23 21V13" />
        <path d="M12 17.500l9.500-10.500" strokeWidth="4.500" />
        <path d="M23.500 5l2.500-2.700" strokeWidth="4.500" />
      </svg>
    </div>
  </div>
);

export default function App() {
  return (
    <div className="h-[1820px] w-[3580px] overflow-hidden bg-white font-[Inter,sans-serif] text-[#444]">
      <BrowserBar />
      <div className="flex h-20 justify-end">
        <button className="flex h-20 w-[545px] items-center justify-center rounded-[10px] bg-[#ca434a] pt-[5px] text-[27px] tracking-[0.05px] text-white">Logout : awstestuser222@gmail.com</button>
      </div>
      <nav className="flex h-[92px] items-start bg-[#5289f7] font-['Liberation_Sans',sans-serif] text-[32px] leading-9 text-white">
        <div className="w-[325px] pl-[107px] pt-6">HySDS</div>
        <div className="h-[89px] w-[147px] bg-[#1b5eec] pt-6 text-center">Tosca</div>
        <div className="w-[195px] pl-8 pt-6">Figaro</div>
        <div className="flex w-[226px] items-center pt-[27px]">
          <span>Sources</span>
          <svg className="ml-[18px] mt-0.5 h-3 w-5" viewBox="0 0 20 12" fill="#fff"><path d="M1 0h18l-9 11z" /></svg>
        </div>
        <div className="pt-[31px] font-[Inter,sans-serif] text-[26px] leading-8 tracking-[-0.3px]">Dark Mode</div>
      </nav>
      <div className="flex">
        <Sidebar />
        <main className="w-[2943px]">
          <div className="flex h-[98px] justify-end pr-[39px] pt-5 text-[32px] leading-10 tracking-[-0.45px]">Last Updated: 3/1/2022 9:21:19 AM</div>
          <div className="flex h-[60px] items-center pl-[111px]">
            <svg className="h-[42px] w-[42px]" viewBox="0 0 42 42">
              <circle cx="21" cy="21" r="20" fill="none" stroke="#5289f7" strokeWidth="2" />
              <path d="M18 19h5.500v8.300H25V30h-7v-2.700h1.500v-5.600H18z" fill="#5289f7" />
              <circle cx="21.200" cy="16" r="2.300" fill="#5289f7" />
            </svg>
            <div className="ml-5 flex h-[60px] w-[2003px] items-center rounded-lg border-2 border-[#ccc] pl-5 pt-0.5 text-[24px] tracking-[0.07px] text-[#999]">Input Elasticsearch query string... ex. _id:"test_id"</div>
            <div className="ml-[54px] flex gap-7">
              <Button text="On Demand" box="w-[181px] bg-[#75b566]" />
              <Button text="Create Rule" box="w-[179px] bg-[#5289f7]" />
              <Button text="View Rules" box="w-[171px] bg-[#5289f7]" />
            </div>
          </div>
          <div className="flex justify-end pb-5 pr-10 pt-10">
            <Button text="Hide Map" box="w-[156px] bg-[#5289f7]" />
          </div>
          <div className="relative ml-[129px] h-[900px] w-[2684px] overflow-hidden bg-[#d8e8eb]">
            <MapCanvas />
            <MapControls />
          </div>
          <div className="relative ml-[139px] mt-10 h-[180px] w-[2664px] whitespace-pre border-2 border-[#b1b1b1] pl-[5px] pt-[5px] font-['DejaVu_Sans_Mono',monospace] text-[27px] leading-[32.500px] tracking-[0.06px] text-[#757575]">
            <div>Press SHIFT + ENTER to manually input polygon...</div>
            <div>ex. [ [−125.09335, 42.47589], ... ,[−125.09335, 42.47589] ]</div>
            <svg className="absolute bottom-0.5 right-0.5 h-7 w-7" viewBox="0 0 28 28" stroke="#666" strokeWidth="1.800"><path d="M1 27 27 1M8 27 27 8M15 27l12-12M21 27l6-6" /></svg>
          </div>
          <div className="flex items-center pl-[69px] pr-[70px] pt-[30px] text-[32px] leading-10">
            <div className="-mt-1 flex items-center">
              <span className="tracking-[-0.75px]">Table View:</span>
              <div className="ml-[9px] flex h-[46px] w-[98px] items-center rounded-full bg-[#ccc] pl-2"><div className="h-[30px] w-[30px] rounded-full bg-white" /></div>
            </div>
            <div className="ml-auto flex items-center">
              <span className="mr-[9px] pt-0.5 tracking-[-0.35px]">Sort By:</span>
              <Select value="@timestamp" box="w-[240px] tracking-[-0.7px]" />
              <div className="w-5" />
              <Select value="desc" box="w-[240px] tracking-[-0.6px]" />
              <span className="ml-[30px] mr-[9px] pt-0.5 tracking-[-0.8px]">Page Size:</span>
              <Select value="10" box="w-[160px]" />
            </div>
          </div>
        </main>
      </div>
    </div>
  );
}
